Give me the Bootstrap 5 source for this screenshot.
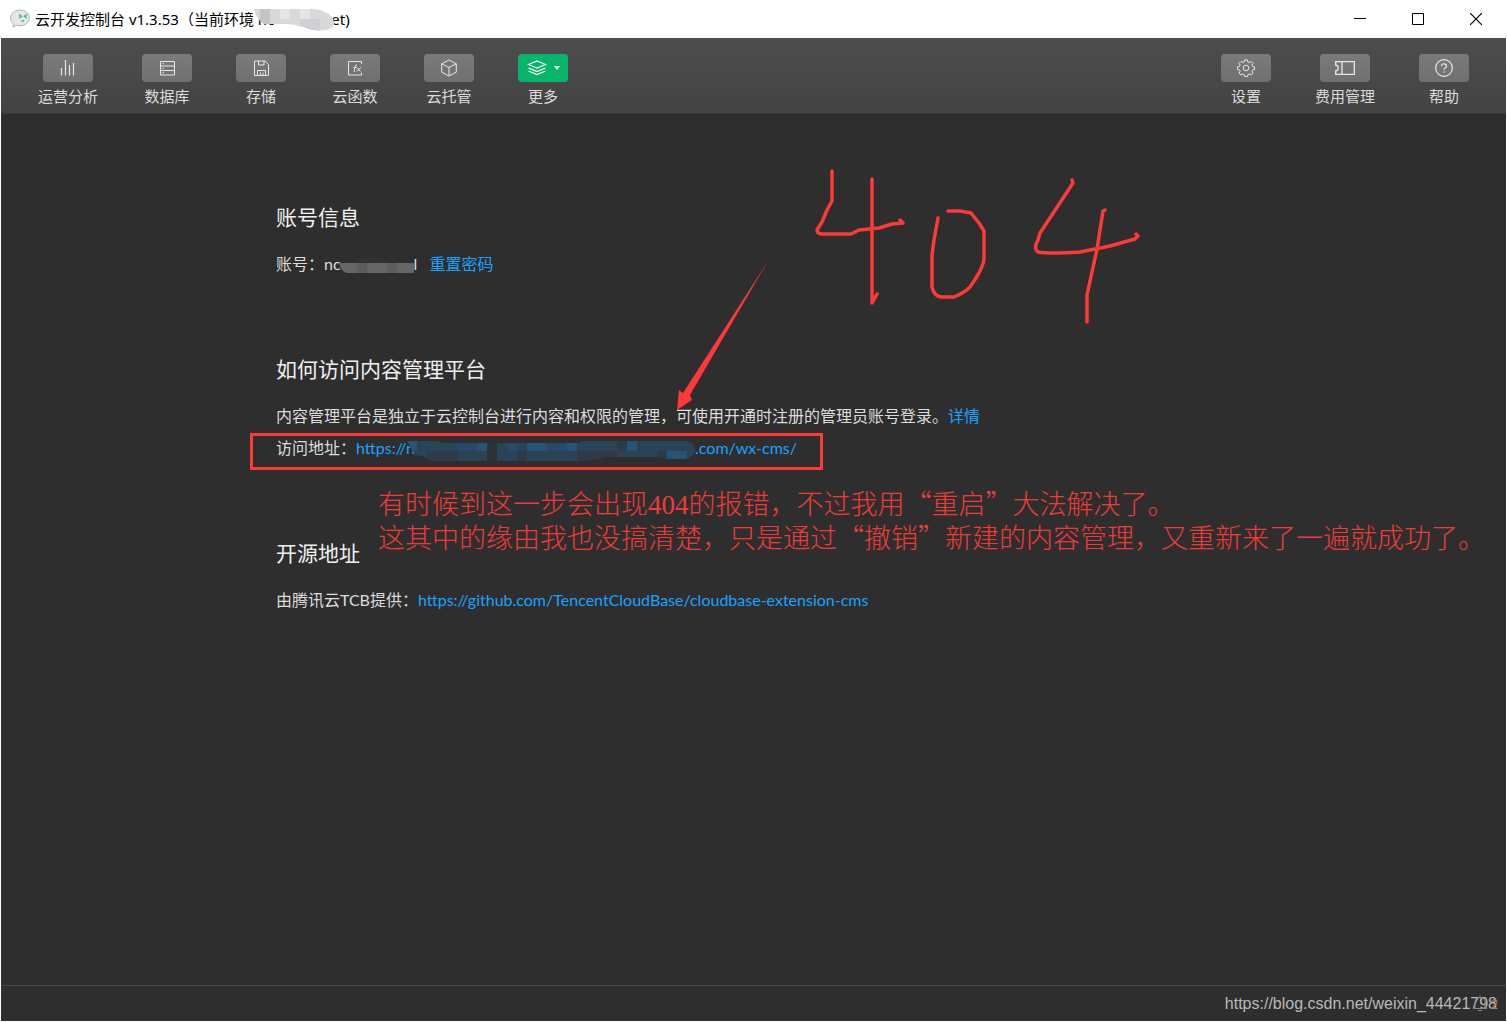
<!DOCTYPE html>
<html lang="zh-CN">
<head>
<meta charset="utf-8">
<meta name="viewport" content="width=device-width, initial-scale=1">
<title>云开发控制台</title>
<link href="https://cdn.jsdelivr.net/npm/bootstrap@5.3.0/dist/css/bootstrap.min.css" rel="stylesheet">
<style>
  :root { --ink: #2e2e2e; --link: #1aa3ff; --mark-red: #ff3838; }
  body { font-family: "Lato", "Noto Sans CJK SC", sans-serif; font-size: 16px; color: #dcdcdc; background: #fff; }
  svg { display: block; }
  a, a:hover { color: var(--link); text-decoration: none; }
  .title-bar { height: 38px; padding-left: 10px; padding-right: 2px; color: #000; font-size: 15px; font-family: "Noto Sans", "Noto Sans CJK SC", sans-serif; }
  .title-text { font-size: 15px; margin-left: 5px; white-space: pre; }
  .win-btn { width: 58px; height: 38px; border: 0; background: none; padding: 0; display: flex; align-items: center; justify-content: center; }
  .app-frame { background: var(--ink); border: 1px solid #fff; border-top: 0; }
  .tool-bar { height: 76px; padding: 16px 37px 0; background: linear-gradient(#4d4d4d, #434343); border-bottom: 1px solid #3a3a3a; }
  .tool-group { gap: 44px; }
  .tool-item { border: 0; background: none; padding: 0; min-width: 50px; color: #dcdcdc; font-size: 15px; line-height: 22px; display: flex; flex-direction: column; align-items: center; }
  .tool-chip { width: 50px; height: 28px; border-radius: 4px; background: linear-gradient(#7a7a7a, #707070); display: flex; align-items: center; justify-content: center; margin-bottom: 3px; color: #e8e8e8; }
  .tool-chip.is-on { background: #06b56a; gap: 7px; color: #fff; }
  .tool-chip svg { fill: none; stroke: currentColor; }
  .page-body { width: 100%; max-width: 955px; margin: 0 auto; padding-top: 87px; }
  .info-block { margin-bottom: 73px; }
  .info-block h2 { font-size: 21px; line-height: 32px; margin: 0 0 15px; font-weight: 400; color: #f0f0f0; }
  .info-block p { line-height: 32px; margin: 0; white-space: nowrap; }
  .hidden-part { display: inline-block; position: relative; height: 16px; vertical-align: middle; }
  .hidden-part svg { position: absolute; }
  .hide-env { width: 57px; } .hide-env svg { left: -20px; top: -4px; }
  .hide-account { width: 73px; } .hide-account svg { left: -2px; top: -4px; }
  .hide-host { width: 280px; } .hide-host svg { left: -8px; top: -1px; }
  .address-line { position: relative; }
  .red-frame { position: absolute; left: -26px; top: 1px; width: 573px; height: 37px; border: 3px solid var(--mark-red); pointer-events: none; }
  .drawn-code { position: absolute; left: 534px; top: 48px; pointer-events: none; }
  .drawn-arrow { position: absolute; left: 396px; top: 146px; pointer-events: none; }
  .red-note { position: absolute; left: 102px; top: 372px; color: #f03a3a; font-family: "Noto Sans CJK SC", sans-serif; font-weight: 300; font-size: 27px; line-height: 34px; white-space: nowrap; }
  .red-note span { font-family: "Liberation Serif", serif; line-height: 1; }
  .status-bar { height: 36px; border-top: 1px solid #484848; padding-right: 9px; position: relative; }
  .blog-mark { font-family: "Liberation Sans", sans-serif; font-size: 16px; color: #b9b9b9; }
  .bell { position: absolute; right: 8px; top: 8px; font-size: 13px; line-height: 20px; color: #b07a58; display: flex; gap: 2px; }
</style>
<script src="https://cdn.jsdelivr.net/npm/bootstrap@5.3.0/dist/js/bootstrap.bundle.min.js"></script>
</head>
<body>
<div class="d-flex flex-column min-vh-100">
  <header class="title-bar d-flex align-items-center">
    <svg width="20" height="20" viewBox="0 0 20 20"><path d="M10 1C4.600 1 .6 4.300.6 9c0 2.600 1.200 4.500 2.800 5.800L2.800 18l3.700-1.800c1.100.4 2.300.5 3.500.5 5.400 0 9.400-3.200 9.400-7.700S15.400 1 10 1z" fill="#e6e6e6" stroke="#b5b5b5"/><path d="M9 5.500l2.500 1.700L9 9M17 5.500l-2.500 1.700L17 9M11.500 11.500q1.300 1 2.600 0" fill="none" stroke="#28bd72" stroke-width="1.300"/></svg>
    <span class="title-text">云开发控制台 v1.3.53（当前环境 nc<span class="hidden-part hide-env"><svg width="82" height="22"><clipPath id="envClip"><path d="M0 0H52Q70-1 78 8Q83 16 76 20Q62 24 50 18Q40 15 30 15H10Q2 10 0 0z"/></clipPath><g clip-path="url(#envClip)"><path fill="#d9d9dc" d="M0 0h82v22H0z"/><path fill="#c5c5c8" d="M6 0h10v20H6z"/><path fill="#e5e5e8" d="M26 0h10v10H26zM46 0h10v10H46z"/><path fill="#cfcfd4" d="M46 10h20v12H46z"/></g></svg></span>et)</span>
    <div class="d-flex ms-auto">
      <button class="win-btn" aria-label="最小化"><svg width="12" height="12"><path d="M0 5.500h12" stroke="#000"/></svg></button>
      <button class="win-btn" aria-label="最大化"><svg width="12" height="12"><path d="M.5.5h11v11H.5z" fill="none" stroke="#000"/></svg></button>
      <button class="win-btn" aria-label="关闭"><svg width="12" height="12"><path d="M0 0l12 12M12 0L0 12" stroke="#000" stroke-width="1.200"/></svg></button>
    </div>
  </header>

  <div class="app-frame flex-grow-1 d-flex flex-column">
    <nav class="tool-bar d-flex justify-content-between align-items-start">
      <div class="tool-group d-flex">
        <button class="tool-item"><span class="tool-chip"><svg width="16" height="16"><path d="M1.500 8v7.500M5.500 0v15.500M9.500 5v10.500M13.500 3v12.500" stroke-width="1.200"/></svg></span>运营分析</button>
        <button class="tool-item"><span class="tool-chip"><svg width="16" height="16"><path d="M1.500 1.500h14v13.500h-14zM1.500 6h14M1.500 10.500h14M3.500 3.700h1.500M3.500 8.200h1.500M3.500 12.700h1.500"/></svg></span>数据库</button>
        <button class="tool-item"><span class="tool-chip"><svg width="16" height="16"><path d="M1.500 1h10.500l3.500 3.500v11h-14zM5.500 1v4h5.500v-4M4.500 15.500v-5h8v5M7.500 12.500v3M10 12.500v3"/></svg></span>存储</button>
        <button class="tool-item"><span class="tool-chip"><svg width="16" height="16"><path d="M14.500 4V1.500H1.500v13.500h13V12.500"/><path d="M10 5Q8.500 4.500 8.200 6.500L7 12M6.500 7.500h3M10 7.500l3.500 4M14 7.500l-4.500 4"/></svg></span>云函数</button>
        <button class="tool-item"><span class="tool-chip"><svg width="16" height="18"><path d="M8 1l7.300 3.800v8.400L8 17 .7 13.200V4.800zM.7 4.800L8 8.500l7.300-3.700M8 8.500V17"/></svg></span>云托管</button>
        <button class="tool-item"><span class="tool-chip is-on"><svg width="20" height="16"><path d="M10 1l8.500 3.500L10 8 1.500 4.500zM1.500 8L10 11.500 18.500 8M1.500 11L10 14.500l8.500-3.500" stroke-width="1.200"/></svg><svg width="6" height="4"><path d="M0 0h6L3 4z" fill="#fff" stroke="none"/></svg></span>更多</button>
      </div>
      <div class="tool-group d-flex">
        <button class="tool-item"><span class="tool-chip"><svg width="18" height="18"><circle cx="9" cy="9" r="2.800"/><path d="M7.500 1h3l.4 2 1.400.6 1.700-1.200 2 2-1.100 1.700.6 1.400 2 .4v2.700l-2 .4-.6 1.400 1.100 1.700-2 2-1.700-1.100-1.400.6-.4 2h-3l-.4-2-1.400-.6L4 16.100l-2-2 1.100-1.700L2.500 11l-2-.4V7.900l2-.4.6-1.400L2 4.400l2-2 1.700 1.200L7.100 3z"/></svg></span>设置</button>
        <button class="tool-item"><span class="tool-chip"><svg width="20" height="14"><path d="M.7.7h18.600v12.600H.7V10q2.600-.6 2.600-3T.7 4zM7 .7v12.600" stroke-width="1.300"/></svg></span>费用管理</button>
        <button class="tool-item"><span class="tool-chip"><svg width="18" height="18"><circle cx="9" cy="9" r="8.300" stroke-width="1.200"/><path d="M6.500 7.200Q6.500 4.800 9 4.800t2.500 2.200Q11.500 8.300 10 9q-1 .6-1 1.800M9 12.200v1.500" stroke-width="1.200"/></svg></span>帮助</button>
      </div>
    </nav>

    <main class="flex-grow-1">
      <div class="page-body position-relative">
        <section class="info-block">
          <h2>账号信息</h2>
          <p>账号：nc<span class="hidden-part hide-account"><svg width="75" height="22"><path d="M20 4l10-4 14 6h14l12 3v2H20z" fill="#313131"/><path d="M0 9h75v10H8Q2 18 0 9z" fill="#666"/><path d="M18 9h10v10H18zM48 9h10v10H48z" fill="#5c5c5c"/></svg></span>l <a href="#" class="ms-2">重置密码</a></p>
        </section>
        <section class="info-block">
          <h2>如何访问内容管理平台</h2>
          <p>内容管理平台是独立于云控制台进行内容和权限的管理，可使用开通时注册的管理员账号登录。<a href="#">详情</a></p>
          <p class="address-line">访问地址：<a href="#">https://n<span class="hidden-part hide-host"><svg width="288" height="21"><clipPath id="hostClip"><path d="M0 0h30l6 2h134l8-2h102q8 2 8 9-2 8-9 9h-20l-6-2h-53l-14 3-10 1H24l-8-5-8-1z"/></clipPath><g clip-path="url(#hostClip)"><path fill="#2a4357" d="M0 0h288v21H0z"/><path fill="#275476" d="M0 0h10v10H0zM70 0h10v10H70zM120 0h20v10h-20zM160 0h10v10h-10zM220 0h10v10h-10zM260 10h20v11h-20z"/><path fill="#28496a" d="M50 0h20v10H50zM100 0h10v10h-10zM140 0h20v10h-20z"/><path fill="#2b3b47" d="M20 10h30v11H20zM110 10h10v11h-10zM170 10h40v11h-40zM210 0h10v10h-10zM250 10h10v11h-10z"/><path fill="#2e3235" d="M80 0h10v21H80z"/></g></svg></span>.com/wx-cms/</a><span class="red-frame"></span></p>
        </section>
        <section class="info-block">
          <h2>开源地址</h2>
          <p>由腾讯云TCB提供：<a href="#">https://github.com/TencentCloudBase/cloudbase-extension-cms</a></p>
        </section>

        <svg class="drawn-code" width="340" height="170" viewBox="810 162 340 170" fill="none" stroke="#ff3838" stroke-width="3.500" stroke-linecap="round" stroke-linejoin="round"><path d="M832 171v30l-5 9-5 12-5 8q0 4 6 4h28l8-4 20-2 13-4 11-1-3-3M872 179v124l5-9"/><path d="M938 218l-4 22-2 15v32q2 9 9 10h13q10-4 16-10l6-9q8-13 8-20v-27l-5-8-8-10-11-2H948"/><path d="M1072 180l1 3-33 50-2 7q-5 8 0 12 10 2 42 0l30-6 25-7 3-3-2-2M1105 210l-2 1-6 38-10 46v27"/></svg>
        <svg class="drawn-arrow" width="98" height="152" viewBox="672 260 98 152"><path d="M768 261L690 395l2 5-15 10 2-20 4 3z" fill="#ff3838"/></svg>
        <div class="red-note">有时候到这一步会出现<span>404</span>的报错，不过我用“重启”大法解决了。<br>这其中的缘由我也没搞清楚，只是通过“撤销”新建的内容管理，又重新来了一遍就成功了。</div>
      </div>
    </main>

    <footer class="status-bar d-flex align-items-center justify-content-end">
      <span class="bell"><svg width="16" height="18" fill="none" stroke="#888"><path d="M1 14.500h14M3 14V7.500q0-4 5-4t5 4V14M8 1.500v2M6 16.500h4"/></svg>2</span>
      <span class="blog-mark">https://blog.csdn.net/weixin_44421798</span>
    </footer>
  </div>
</div>
</body>
</html>
